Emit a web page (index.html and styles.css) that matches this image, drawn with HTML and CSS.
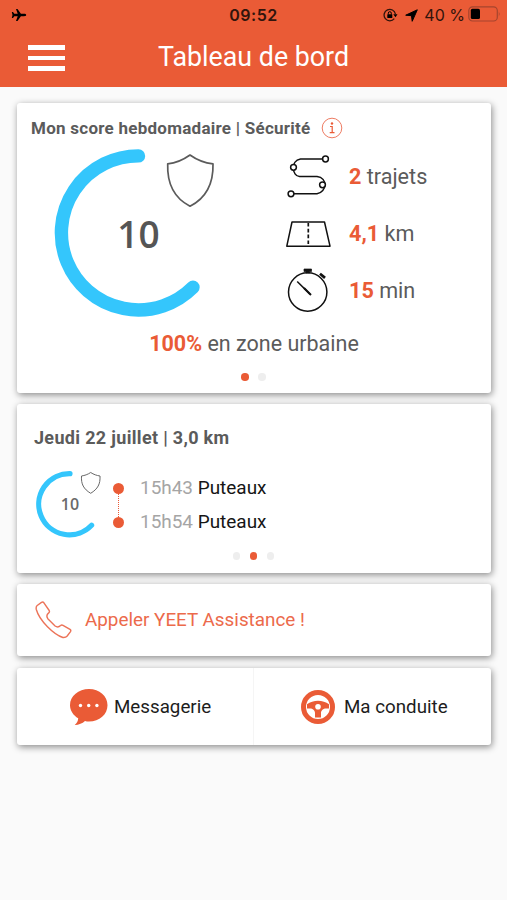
FILE: index.html
```html
<!DOCTYPE html>
<html lang="fr">
<head>
<meta charset="utf-8">
<title>Tableau de bord</title>
<link rel="stylesheet" href="styles.css">
</head>
<body>
<header class="top">
  <div class="status">
    <svg class="plane" width="16" height="14" viewBox="0 0 16 14"><path d="M15.2 7c0 .8-1 1.200-2 1.200H9.900L6.500 13H5l1.700-4.800H3.300L2 9.900H.8L1.500 7 .8 4.100H2l1.300 1.700h3.400L5 1h1.500l3.400 4.800h3.300c1 0 2 .4 2 1.200z"/></svg>
    <span class="time">09:52</span>
    <div class="indicators">
      <svg width="15" height="14" viewBox="0 0 15 14"><path d="M11.300 10.600A5.700 5.700 0 1 1 12.400 6" fill="none" stroke="#31140c" stroke-width="1.300"/><path d="M10.300 6.200h4.200l-2 3z"/><rect x="4.300" y="6.200" width="5" height="3.900" rx=".5"/><path d="M5.300 6.500V5.200a1.500 1.500 0 0 1 3 0v1.300" fill="none" stroke="#000" stroke-width="1"/></svg>
      <svg class="arrow" width="13" height="13" viewBox="0 0 13 13"><path d="M12.300.8 7.200 12.300 6.500 6.700.7 6.200z" stroke="#000" stroke-width="1" stroke-linejoin="round"/></svg>
      <span class="percent">40 %</span>
      <svg class="battery" width="33" height="16" viewBox="0 0 33 16"><rect x=".8" y=".8" width="28.500" height="14.200" rx="3.800" fill="none" stroke="#a5452e" stroke-width="1.200"/><rect x="2.800" y="2.800" width="9.200" height="10.200" rx="1.600"/><path d="M30.800 5.500q1.800 2.500 0 5z" fill="#a5452e"/></svg>
    </div>
  </div>
  <div class="nav">
    <div class="menu"><i></i><i></i><i></i></div>
    <h1>Tableau de bord</h1>
  </div>
</header>
<main>
  <section class="card score">
    <div class="score-head">
      <h2>Mon score hebdomadaire | Sécurité</h2>
      <svg width="22" height="22" viewBox="0 0 22 22" fill="none" stroke="#ee7c63"><circle cx="11" cy="11" r="9.800"/><circle cx="11" cy="6.500" r="1.200" fill="#ea5b36" stroke="none"/><path d="M9 9.500h2.200v6M8.700 15.600h4.800" stroke="#ea5b36" stroke-width="1.200"/></svg>
    </div>
    <div class="score-main">
      <div class="gauge">
        <svg width="170" height="180" viewBox="50 144 170 180" fill="none"><path d="M138.500 155.900A77 77 0 1 0 193 287.200" stroke="#34c6fc" stroke-width="13.400" stroke-linecap="round"/><path d="M190 155c-7 5-14 8-22.300 8.900C167 184 174 198 190 206.200 206 198 213.500 184 213 163.900 205 163 197 160 190 155z" stroke="#5b5b5b" stroke-width="1.700" stroke-linejoin="round"/></svg>
        <span class="big-value">10</span>
      </div>
      <ul class="stats">
        <li><svg width="46" height="46" viewBox="0 0 46 46" fill="none" stroke="#111" stroke-width="1.500"><path d="M37 5H14.500C4 7 6 22 13.500 22.500H31C42 24 41 38 31 39.700H7"/><g fill="#fff"><circle cx="39.500" cy="5" r="2.900"/><circle cx="7.500" cy="13.300" r="2.900"/><circle cx="36.500" cy="30.800" r="2.900"/><circle cx="5" cy="39.800" r="2.900"/></g></svg><p><b>2</b> trajets</p></li>
        <li><svg width="46" height="46" viewBox="0 0 46 46" fill="none" stroke="#111" stroke-width="1.500"><path d="M6 11h32.500l5.500 24.200H.8z" stroke-linejoin="round"/><path d="M22.300 12v23" stroke-width="1.700" stroke-dasharray="3.600 2.200"/></svg><p><b>4,1</b> km</p></li>
        <li><svg width="46" height="46" viewBox="0 0 46 46" fill="none" stroke="#111" stroke-width="1.500"><circle cx="21.700" cy="24" r="19.200"/><path d="M18 1h7.500v2.500h-1.800V5H20V3.500h-2z" fill="#111" stroke-width=".7"/><path d="m34 5.700 5 4.200" stroke-width="2.700"/><path d="m11.200 13.500 12.800 12.600"/><path d="m18 20 7 7" stroke-width="2"/></svg><p><b>15</b> min</p></li>
      </ul>
    </div>
    <p class="zone"><b>100%</b> en zone urbaine</p>
    <div class="dots"><i class="on"></i><i></i></div>
  </section>

  <section class="card trip">
    <h2>Jeudi 22 juillet | 3,0 km</h2>
    <div class="trip-main">
      <div class="gauge">
        <svg width="70" height="72" viewBox="34 468 70 72" fill="none"><path d="M70 473.600A30.600 30.600 0 1 0 91.600 525.200" stroke="#34c6fc" stroke-width="5.200" stroke-linecap="round"/><path d="M90.700 472.500c-3 2-6 3-9.200 3.500-.5 8 2 13 9.200 17.300 7-4.300 9.800-9.300 9.300-17.300-3.300-.5-6.300-1.500-9.300-3.500z" stroke="#686868" stroke-width="1" stroke-linejoin="round"/></svg>
        <span class="small-value">10</span>
      </div>
      <div class="route"><i></i><span></span><i></i></div>
      <ul class="stops">
        <li><time>15h43</time> Puteaux</li>
        <li><time>15h54</time> Puteaux</li>
      </ul>
    </div>
    <div class="dots"><i></i><i class="on"></i><i></i></div>
  </section>

  <section class="card call">
    <svg width="38" height="38" viewBox="0 0 38 38" fill="none" stroke="#ec7358" stroke-width="1.400" stroke-linejoin="round"><path d="M2.200 4.500 6.500 1.400q1.400-.8 2.400.4l5.300 7.700q.7 1.300-.5 2.400c-2.500 2-2.500 3.400-.9 5.800l7.300 7.300c2 1.500 3.500 1.500 5.500-.4q1-1 2.400-.3l7 4.100q1.300.9.500 2.200l-3.300 4.400q-1.500 1.800-4.300 1.500C19 33.500 4.500 20 1.300 8.500Q.7 5.800 2.200 4.500z"/></svg>
    <span>Appeler YEET Assistance !</span>
  </section>

  <section class="card actions">
    <div class="action message">
      <svg width="38" height="36" viewBox="0 0 38 36"><path d="M19 0C29.500 0 37.500 7 37.500 16.200S29.500 32.500 19 32.500q-2.200 0-4-.5-4 3.700-10.300 4 3.300-2.700 3.500-6.800C3.500 26.500 0 21.800 0 16.200 0 7 8.500 0 19 0z" fill="#ea5b36"/><g fill="#fff"><circle cx="10.500" cy="16.500" r="1.700"/><circle cx="18.700" cy="16.500" r="1.700"/><circle cx="26.900" cy="16.500" r="1.700"/></g></svg>
      <span>Messagerie</span>
    </div>
    <div class="action drive">
      <svg width="34" height="34" viewBox="0 0 34 34"><circle cx="17" cy="17" r="14.500" fill="none" stroke="#ea5b36" stroke-width="5"/><path d="M6 14.200C9 12 13 10.700 17 10.700s8 1.300 11 3.500v4.300h-3c-2.700 0-5 2-5 4.500v4.500h-6V23c0-2.500-2.300-4.500-5-4.500H6z" fill="#ea5b36"/><circle cx="17" cy="16.700" r="2.800" fill="#fff"/></svg>
      <span>Ma conduite</span>
    </div>
  </section>
</main>
</body>
</html>
```
FILE: styles.css
```css
* { box-sizing: border-box; margin: 0; padding: 0; }
body { width: 507px; height: 900px; background: #fafafa; color: #5b5b5b; font-family: Roboto, "Liberation Sans", sans-serif; overflow: hidden; }
svg { display: block; flex: none; }
ul { list-style: none; }
b { color: #ea5b36; font-weight: 700; }

.top { height: 87px; background: #ea5b36; }
.status { height: 30px; display: grid; grid-template-columns: 1fr 60px 1fr; align-items: center; color: #31140c; font-family: Inter, sans-serif; }
.plane { margin-left: 11px; }
.time { text-align: center; font-size: 16px; font-weight: 600; letter-spacing: .5px; }
.indicators { display: flex; align-items: center; justify-content: flex-end; padding-right: 6px; }
.indicators > :first-child { margin-right: 1px; }
.arrow { margin-left: 6px; }
.percent { margin-left: 6px; font-size: 16px; letter-spacing: 0; white-space: nowrap; }
.battery { margin-left: 3px; margin-top: -2px; }
.nav { height: 57px; display: grid; grid-template-columns: 95px 1fr 95px; align-items: start; }
.menu { display: flex; flex-direction: column; gap: 6px; margin: 15px 0 0 28px; width: 37px; }
.menu i { height: 4.500px; background: #fff; }
h1 { color: #fff; font-size: 26.800px; font-weight: 400; line-height: 32px; margin-top: 11px; text-align: center; white-space: nowrap; }

main { display: flex; flex-direction: column; gap: 11px; padding: 16px 16px 0 17px; }
.card { background: #fff; border-radius: 3px; box-shadow: 1px 2px 7px rgba(0,0,0,.45); }
h2 { font-weight: 700; white-space: nowrap; }

.score { height: 290px; padding-top: 13px; }
.score-head { display: flex; align-items: center; height: 24px; padding-left: 14px; gap: 10px; }
.score-head h2 { font-size: 17px; letter-spacing: .26px; }
.score-main { display: flex; height: 192px; }
.gauge { display: grid; flex: none; }
.gauge > * { grid-area: 1 / 1; }
.gauge span { font-family: "Open Sans", sans-serif; font-weight: 600; text-align: center; color: #555; }
.score .gauge { margin: 4px 0 0 33px; width: 170px; height: 180px; }
.gauge .big-value { width: 177px; font-size: 37px; line-height: 180px; }
.stats { margin: 8px 0 0 66px; }
.stats li { display: flex; align-items: center; height: 57px; gap: 17px; font-size: 21.600px; white-space: nowrap; }
.zone { text-align: center; font-size: 21.500px; line-height: 24px; }
.dots { display: flex; justify-content: center; gap: 9.500px; padding-right: 1px; }
.dots i { width: 7.500px; height: 7.500px; border-radius: 50%; background: #eee; }
.dots i.on { background: #ea5b36; }
.score .dots { margin-top: 17px; }

.trip { height: 169px; padding-top: 22px; }
.trip h2 { padding-left: 17px; font-size: 18px; letter-spacing: .32px; line-height: 24px; }
.trip-main { display: flex; height: 84px; padding: 18px 0 0 17px; }
.trip .gauge { width: 70px; height: 66px; }
.gauge .small-value { width: 72px; font-size: 16px; line-height: 73px; color: #6a6a6a; }
.route { display: flex; flex-direction: column; align-items: center; width: 12px; margin: 15px 0 0 8px; height: 45px; }
.route i { flex: none; width: 11px; height: 11px; border-radius: 50%; background: #ea5b36; }
.route span { flex: 1; border-left: 1px dotted #ea5b36; }
.stops { margin: 3px 0 0 16px; color: #151515; font-size: 18.950px; line-height: 33.500px; white-space: nowrap; }
.stops time { color: #a5a5a5; }
.trip .dots { margin-top: 18px; }

.call { height: 72px; margin-bottom: 1px; display: flex; align-items: center; padding-left: 18px; gap: 12px; color: #ec6a4b; font-size: 18.850px; }

.actions { height: 77px; display: flex; }
.action { display: flex; align-items: center; color: #1d1d1d; font-size: 18.750px; white-space: nowrap; }
.message { width: 237px; padding-left: 53px; gap: 6px; border-right: 1px solid #f5f5f5; }
.drive { flex: 1; padding-left: 47px; gap: 9px; }
```
